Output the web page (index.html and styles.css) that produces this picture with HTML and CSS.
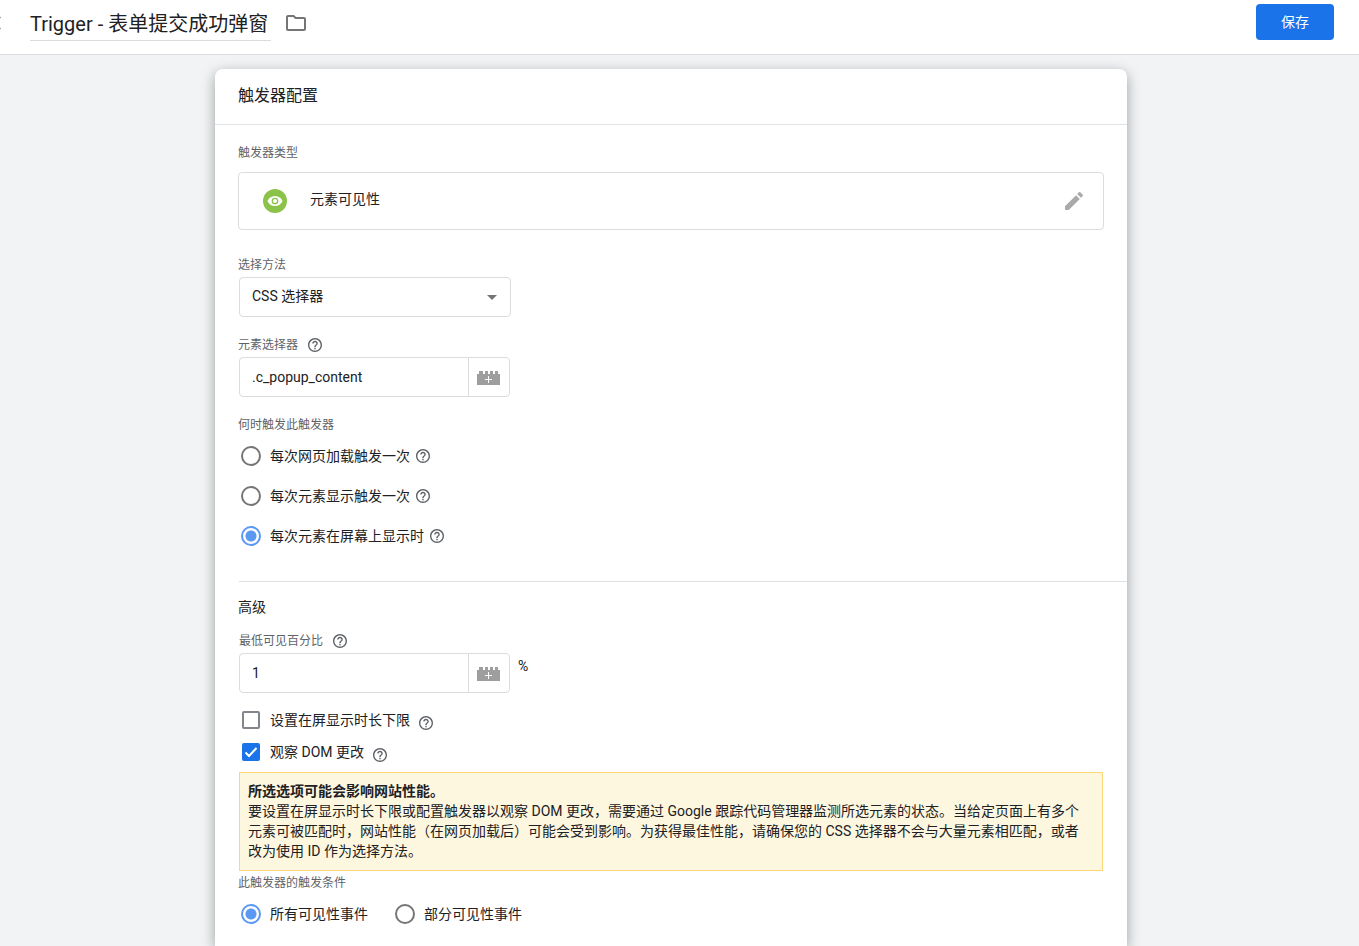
FILE: index.html
```html
<!DOCTYPE html>
<html lang="zh-CN">
<head>
  <meta charset="UTF-8">
  <meta name="viewport" content="width=device-width, initial-scale=1.0">
  <title>Trigger - 表单提交成功弹窗</title>
  <link rel="stylesheet" href="styles.css">
</head>
<body>
  <!-- shared icons -->
  <svg class="sprite" aria-hidden="true">
    <symbol id="help" viewBox="2 2 20 20">
      <path d="M11 18h2v-2h-2v2zm1-16C6.48 2 2 6.48 2 12s4.48 10 10 10 10-4.48 10-10S17.52 2 12 2zm0 18c-4.41 0-8-3.59-8-8s3.59-8 8-8 8 3.59 8 8-3.59 8-8 8zm0-14c-2.21 0-4 1.79-4 4h2c0-1.1.9-2 2-2s2 .9 2 2c0 2-3 1.75-3 5h2c0-2.25 3-2.5 3-5 0-2.21-1.79-4-4-4z"/>
    </symbol>
    <symbol id="brick" viewBox="0 0 23 14">
      <path fill="#9e9e9e" d="M0 3h2V0h4v3h2V0h3v3h2V0h3v3h2V0h3v3h2v11H0z"/>
      <path fill="#fff" d="M11 5h1v3h3v1h-3v3h-1V9H8V8h3z"/>
    </symbol>
  </svg>

  <header class="topbar">
    <button class="close" aria-label="关闭">
      <svg viewBox="0 0 24 24"><path d="M19 6.41L17.59 5 12 10.59 6.41 5 5 6.41 10.59 12 5 17.59 6.41 19 12 13.41 17.59 19 19 17.59 13.41 12z"/></svg>
    </button>
    <input class="name" type="text" value="Trigger - 表单提交成功弹窗" aria-label="触发器名称">
    <button class="folder" aria-label="文件夹">
      <svg viewBox="2 4 20 16"><path d="M9.17 6l2 2H20v10H4V6h5.17M10 4H4c-1.1 0-1.99.9-1.99 2L2 18c0 1.1.9 2 2 2h16c1.1 0 2-.9 2-2V8c0-1.1-.9-2-2-2h-8l-2-2z"/></svg>
    </button>
    <button class="save">保存</button>
  </header>

  <main>
    <section class="card">
      <h2 class="card-title">触发器配置</h2>

      <div class="card-body">
        <div class="label type-label">触发器类型</div>
        <div class="type-box">
          <svg class="type-icon" viewBox="0 0 24 24">
            <circle cx="12" cy="12" r="12" fill="#8bc34a"/>
            <path fill="#fff" d="M12 6.900C8.500 6.900 5.600 9 4.400 12c1.200 3 4.100 5.100 7.600 5.100s6.400-2.100 7.600-5.100C18.400 9 15.500 6.900 12 6.900z"/>
            <circle cx="12" cy="12" r="2.700" fill="#fff" stroke="#8bc34a" stroke-width="1.300"/>
          </svg>
          <span class="type-name">元素可见性</span>
          <button class="edit" aria-label="修改">
            <svg viewBox="3 3 18 18"><path d="M3 17.250V21h3.750L17.810 9.940l-3.750-3.750L3 17.250zM20.710 7.040a1 1 0 0 0 0-1.410l-2.340-2.340a1 1 0 0 0-1.410 0l-1.830 1.830 3.750 3.750 1.830-1.830z"/></svg>
          </button>
        </div>

        <label class="label" for="method">选择方法</label>
        <div class="select">
          <select id="method"><option>CSS 选择器</option></select>
          <svg viewBox="0 0 10 5"><path d="M0 0h10L5 5z"/></svg>
        </div>

        <div class="label">
          <label for="selector">元素选择器</label>
          <svg class="help"><use href="#help"/></svg>
        </div>
        <div class="field">
          <input id="selector" type="text" value=".c_popup_content">
          <button aria-label="插入变量"><svg class="brick"><use href="#brick"/></svg></button>
        </div>

        <div class="label">何时触发此触发器</div>
        <div class="option">
          <input type="radio" name="when" id="when-page">
          <label for="when-page">每次网页加载触发一次</label>
          <svg class="help"><use href="#help"/></svg>
        </div>
        <div class="option">
          <input type="radio" name="when" id="when-element">
          <label for="when-element">每次元素显示触发一次</label>
          <svg class="help"><use href="#help"/></svg>
        </div>
        <div class="option">
          <input type="radio" name="when" id="when-every" checked>
          <label for="when-every">每次元素在屏幕上显示时</label>
          <svg class="help"><use href="#help"/></svg>
        </div>

        <div class="advanced">
          <h3>高级</h3>
          <div class="label">
            <label for="percent">最低可见百分比</label>
            <svg class="help"><use href="#help"/></svg>
          </div>
          <div class="field-row">
            <div class="field">
              <input id="percent" type="text" value="1">
              <button aria-label="插入变量"><svg class="brick"><use href="#brick"/></svg></button>
            </div>
            <span class="unit">%</span>
          </div>

          <div class="checks">
            <div class="option check">
              <input type="checkbox" id="min-time">
              <label for="min-time">设置在屏显示时长下限</label>
              <svg class="help"><use href="#help"/></svg>
            </div>
            <div class="option check">
              <span class="tick">
                <input type="checkbox" id="observe" checked>
                <svg viewBox="0 0 18 18"><path d="M3.500 9.500l3.500 3.500 7.500-8"/></svg>
              </span>
              <label for="observe">观察 DOM 更改</label>
              <svg class="help"><use href="#help"/></svg>
            </div>
          </div>

          <div class="notice">
            <strong>所选选项可能会影响网站性能。</strong>
            <p>要设置在屏显示时长下限或配置触发器以观察 DOM 更改，需要通过 Google 跟踪代码管理器监测所选元素的状态。当给定页面上有多个元素可被匹配时，网站性能（在网页加载后）可能会受到影响。为获得最佳性能，请确保您的 CSS 选择器不会与大量元素相匹配，或者改为使用 ID 作为选择方法。</p>
          </div>
        </div>

        <div class="label fire-label">此触发器的触发条件</div>
        <div class="option-row">
          <div class="option">
            <input type="radio" name="fire" id="fire-all" checked>
            <label for="fire-all">所有可见性事件</label>
          </div>
          <div class="option">
            <input type="radio" name="fire" id="fire-some">
            <label for="fire-some">部分可见性事件</label>
          </div>
        </div>
      </div>
    </section>
  </main>
</body>
</html>
```
FILE: styles.css
```css
* {
  box-sizing: border-box;
}

body {
  margin: 0;
  min-height: 100vh;
  display: flex;
  flex-direction: column;
  font-family: Roboto, "Noto Sans CJK SC", sans-serif;
  font-size: 14px;
  line-height: 20px;
  color: #202124;
  background: #f1f3f4;
  overflow-x: hidden;
}

button, input, select {
  font: inherit;
  color: inherit;
  margin: 0;
}

button {
  padding: 0;
  border: none;
  background: none;
  cursor: pointer;
}

svg {
  display: block;
  flex: none;
}

.sprite {
  display: none;
}

/* top bar */
.topbar {
  display: flex;
  align-items: flex-start;
  height: 55px;
  padding: 4px 25px 0 0;
  background: #fff;
  border-bottom: 1px solid #dadce0;
}

.close {
  margin: 7px 24px 0 -18px;
}

.close svg {
  width: 24px;
  height: 24px;
  fill: #80868b;
}

.name {
  width: 241px;
  height: 37px;
  padding: 0;
  border: none;
  border-bottom: 1px solid #dadce0;
  background: none;
  font-size: 20px;
  outline: none;
}

.folder {
  margin: 11px 0 0 15px;
}

.folder svg {
  width: 20px;
  height: 16px;
  fill: #757575;
}

.save {
  width: 78px;
  height: 36px;
  margin-left: auto;
  border-radius: 4px;
  background: #1a73e8;
  color: #fff;
}

/* card */
main {
  flex: 1;
  display: flex;
  padding: 14px 17px 0 0;
}

.card {
  width: 100%;
  max-width: 912px;
  margin: 0 auto;
  border-radius: 8px 8px 0 0;
  background: #fff;
  box-shadow: 0 4px 14px rgba(0, 0, 0, 0.35);
}

.card-title {
  margin: 0;
  padding: 15px 23px 16px;
  border-bottom: 1px solid #e0e2e4;
  font-size: 16px;
  font-weight: 400;
  line-height: 24px;
}

.card-body {
  padding: 0 23px;
}

.label {
  display: flex;
  align-items: center;
  gap: 10px;
  margin: 20px 0 4px;
  font-size: 12px;
  line-height: 16px;
  color: #5f6368;
}

.type-label {
  margin-bottom: 11px;
}

.help {
  width: 14px;
  height: 14px;
  fill: #5f6368;
}

.type-box {
  display: flex;
  align-items: center;
  height: 58px;
  margin-bottom: 27px;
  padding: 0 20px 0 24px;
  border: 1px solid #dadce0;
  border-radius: 4px;
}

.type-icon {
  width: 24px;
  height: 24px;
  margin-right: 23px;
}

.type-name {
  padding-bottom: 4px;
}

.edit {
  margin-left: auto;
}

.edit svg {
  width: 18px;
  height: 18px;
  fill: #aaa;
}

/* fields */
.select {
  position: relative;
  width: 272px;
  margin-left: 1px;
}

.select select {
  display: block;
  width: 100%;
  height: 40px;
  padding: 0 12px 2px;
  border: 1px solid #dadce0;
  border-radius: 4px;
  background: #fff;
  appearance: none;
}

.select svg {
  position: absolute;
  top: 18px;
  right: 14px;
  width: 10px;
  height: 5px;
  fill: #757575;
  pointer-events: none;
}

.field {
  display: flex;
  width: 271px;
  height: 40px;
  margin-left: 1px;
  border: 1px solid #dadce0;
  border-radius: 4px;
}

.field input {
  flex: 1;
  min-width: 0;
  padding: 0 12px;
  border: none;
  background: none;
  outline: none;
}

.field button {
  width: 41px;
  padding: 2px 0 0 8px;
  border-left: 1px solid #dadce0;
}

.brick {
  width: 23px;
  height: 14px;
}

.field-row {
  display: flex;
  gap: 8px;
}

.unit {
  padding-top: 3px;
}

/* radios and checkboxes */
.option {
  display: flex;
  align-items: center;
  height: 40px;
  padding-left: 3px;
}

.option label {
  margin: 0 6px 0 9px;
}

.label + .option,
.label + .option-row {
  margin-top: -1px;
}

.option input[type="radio"] {
  appearance: none;
  width: 20px;
  height: 20px;
  border: 2px solid #757575;
  border-radius: 50%;
}

.option input[type="radio"]:checked {
  border-color: #5b98f2;
  background: radial-gradient(circle, #5b98f2 5px, #fff 6px);
}

.option input[type="checkbox"] {
  display: block;
  appearance: none;
  width: 18px;
  height: 18px;
  border: 2px solid #80868b;
  border-radius: 2px;
}

.option input[type="checkbox"]:checked {
  border-color: #1a73e8;
  background: #1a73e8;
}

.tick {
  position: relative;
}

.tick svg {
  position: absolute;
  top: 0;
  left: 0;
  width: 18px;
  height: 18px;
  fill: none;
  stroke: #fff;
  stroke-width: 2;
  pointer-events: none;
}

.checks {
  margin-top: 11px;
}

.check {
  height: 32px;
}

.check label {
  margin: 0 9px 0 10px;
}

.check .help {
  margin-top: 5px;
}

.option-row {
  display: flex;
  gap: 18px;
}

/* advanced */
.advanced {
  margin: 25px -23px 0 1px;
  padding: 15px 24px 0 0;
  border-top: 1px solid #dfe1e3;
}

.advanced h3 {
  margin: 0 0 -4px -1px;
  font-size: 14px;
  font-weight: 400;
}

.advanced .label,
.advanced .field {
  margin-left: 0;
}

.notice {
  margin-top: 4px;
  padding: 8px 12px 9px 8px;
  border: 1px solid #fdd876;
  background: #fef7e0;
}

.notice p {
  margin: 0;
}

.fire-label {
  margin-top: 4px;
}
```
